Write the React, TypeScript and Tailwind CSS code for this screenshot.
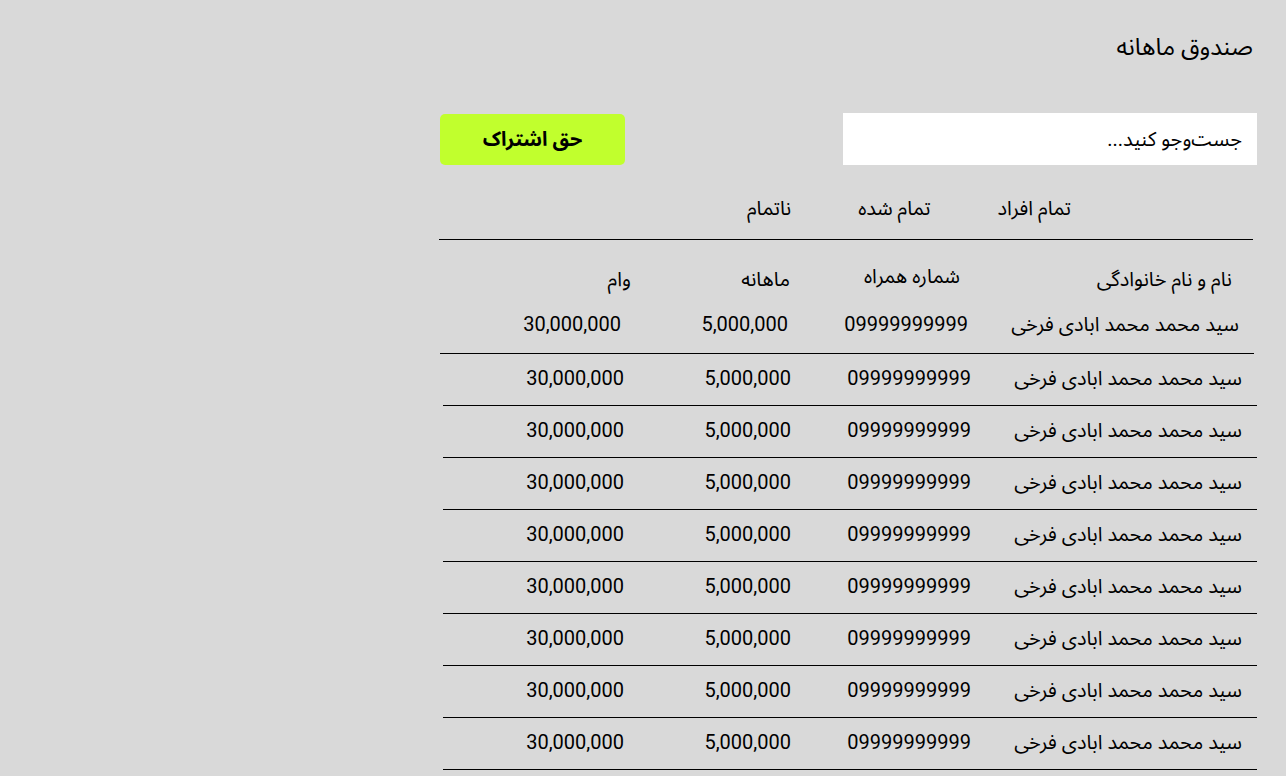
import React from 'react';

const rows = Array.from({ length: 8 });

const person = {
  name: 'سید محمد محمد ابادی فرخی',
  phone: '09999999999',
  monthly: '5,000,000',
  loan: '30,000,000',
};

function DataRow({ className = '' }: { className?: string }) {
  return (
    <div className={`grid grid-cols-[272px_180px_167px_195px] items-center text-[20px] leading-[28px] ${className}`}>
      <div className="pr-[15px]">{person.name}</div>
      <div className="pr-[14px]">{person.phone}</div>
      <div className="pr-[14px]">{person.monthly}</div>
      <div className="pr-[14px]">{person.loan}</div>
    </div>
  );
}

export default function App() {
  return (
    <div
      dir="rtl"
      className="min-h-screen w-full bg-[#d9d9d9] text-black font-['Roboto','Noto_Sans_Arabic','DejaVu_Sans',sans-serif]"
    >
      <div className="w-[817px] mr-[29px] pt-[31px] pb-6">
        {/* Title */}
        <h1 className="mr-[4px] text-[24px] leading-[32px] font-normal">صندوق ماهانه</h1>

        {/* Search + button */}
        <div className="mt-[50px] flex items-center justify-between">
          <input
            type="text"
            placeholder="جست‌وجو کنید..."
            className="w-[414px] h-[52px] bg-white px-[15px] text-[20px] outline-none placeholder:text-black"
          />
          <button className="w-[185px] h-[51px] rounded-[5px] bg-[#c1ff2d] text-[20px] font-bold">
            حق اشتراک
          </button>
        </div>

        {/* Tabs */}
        <div className="mt-[29px] mr-[186px] flex gap-[67px] text-[20px] leading-[28px]">
          <button>تمام افراد</button>
          <button>تمام شده</button>
          <button>ناتمام</button>
        </div>
        <div className="mt-[17px] mr-[4px] w-[814px] h-px bg-black" />

        {/* Header + first row */}
        <div className="mr-[3px] w-[814px]">
          <div className="mt-[25px] grid grid-cols-[272px_180px_167px_195px] text-[20px] leading-[28px]">
            <div className="pr-[22px]">نام و نام خانوادگی</div>
            <div className="pr-[22px] -mt-[3px]">شماره همراه</div>
            <div className="pr-[12px]">ماهانه</div>
            <div className="pr-[4px]">وام</div>
          </div>
          <DataRow className="mt-[17px] pb-[15px] border-b border-black" />
        </div>

        {/* Rows */}
        <div className="ml-[3px] w-[814px]">
          {rows.map((_, i) => (
            <DataRow key={i} className="h-[52px] pb-[3px] border-b border-black" />
          ))}
        </div>
      </div>
    </div>
  );
}
